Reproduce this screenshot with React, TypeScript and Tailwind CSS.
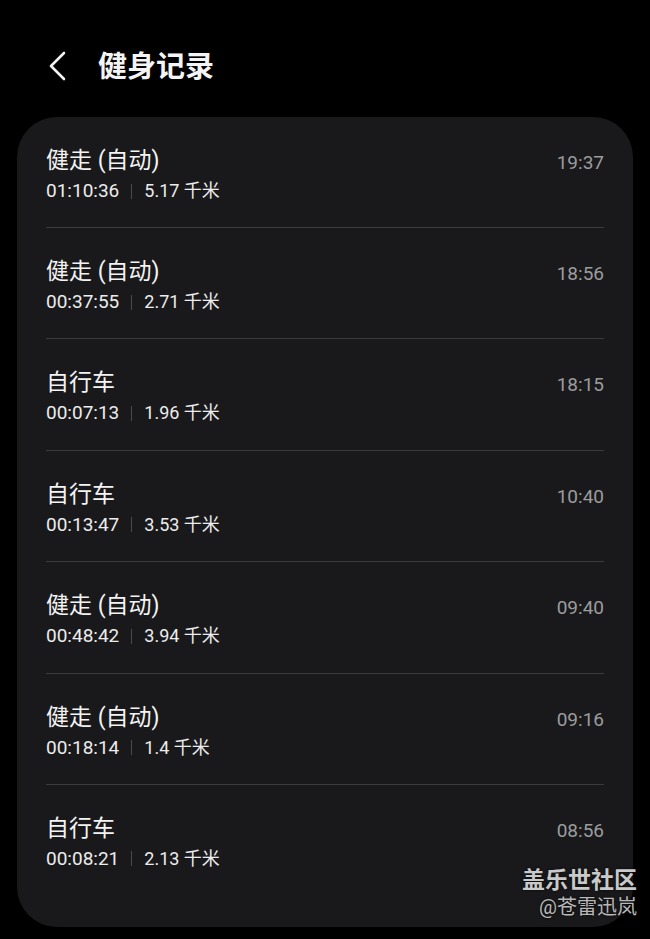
const RECORDS = [
  { name: "健走 (自动)", duration: "01:10:36", distance: "5.17 千米", time: "19:37" },
  { name: "健走 (自动)", duration: "00:37:55", distance: "2.71 千米", time: "18:56" },
  { name: "自行车", duration: "00:07:13", distance: "1.96 千米", time: "18:15" },
  { name: "自行车", duration: "00:13:47", distance: "3.53 千米", time: "10:40" },
  { name: "健走 (自动)", duration: "00:48:42", distance: "3.94 千米", time: "09:40" },
  { name: "健走 (自动)", duration: "00:18:14", distance: "1.4 千米", time: "09:16" },
  { name: "自行车", duration: "00:08:21", distance: "2.13 千米", time: "08:56" },
];

const FONT = "font-['Roboto','Noto_Sans_CJK_SC',sans-serif]";

export default function App() {
  return (
    <div className={`relative h-[939px] w-[650px] overflow-hidden bg-black ${FONT}`}>
      {/* header */}
      <header className="flex h-[117px] items-start pt-[50px]">
        <button className="ml-[46px] flex h-[32px] w-[22px] items-center justify-center">
          <svg width="20" height="30" viewBox="0 0 20 30" fill="none">
            <path d="M17 2 L4 15 L17 28" stroke="#f2f2f2" strokeWidth="2.6" strokeLinecap="round" strokeLinejoin="round" />
          </svg>
        </button>
        <h1 className="ml-[30px] text-[29px] font-bold leading-[34px] text-[#f4f4f4]">健身记录</h1>
      </header>

      {/* list card */}
      <div className="mx-[17px] h-[810px] rounded-[40px] bg-[#19191b] px-[29px]">
        {RECORDS.map((r, i) => (
          <div
            key={i}
            className={`flex justify-between ${
              i === 0 ? "h-[111px] pt-[30px]" : "h-[111.4px] pt-[30px]"
            } ${i < RECORDS.length - 1 ? "border-b border-[#3a3a3c]" : ""}`}
          >
            <div className="flex flex-col">
              <div className="text-[23px] leading-[28px] text-[#f3f3f3]">{r.name}</div>
              <div className="mt-[5px] flex items-center text-[19px] leading-[22px] text-[#ececec]">
                <span>{r.duration}</span>
                <span className="mx-[12px] h-[15px] w-px bg-[#4a4a4c]" />
                <span className="text-[18px]">{r.distance}</span>
              </div>
            </div>
            <div className="mt-[4px] text-[19px] leading-[24px] text-[#9c9c9e]">{r.time}</div>
          </div>
        ))}
      </div>

      {/* watermark */}
      <div className="pointer-events-none absolute right-[13px] top-[866px] flex flex-col items-end">
        <span className="text-[23px] font-bold leading-[29px] text-[#c9c9c9] [text-shadow:0_0_3px_rgba(0,0,0,0.8)]">
          盖乐世社区
        </span>
        <span className="text-[20px] leading-[25px] text-[#b8b8b8] [text-shadow:0_0_3px_rgba(0,0,0,0.8)]">
          @苍雷迅岚
        </span>
      </div>
    </div>
  );
}
